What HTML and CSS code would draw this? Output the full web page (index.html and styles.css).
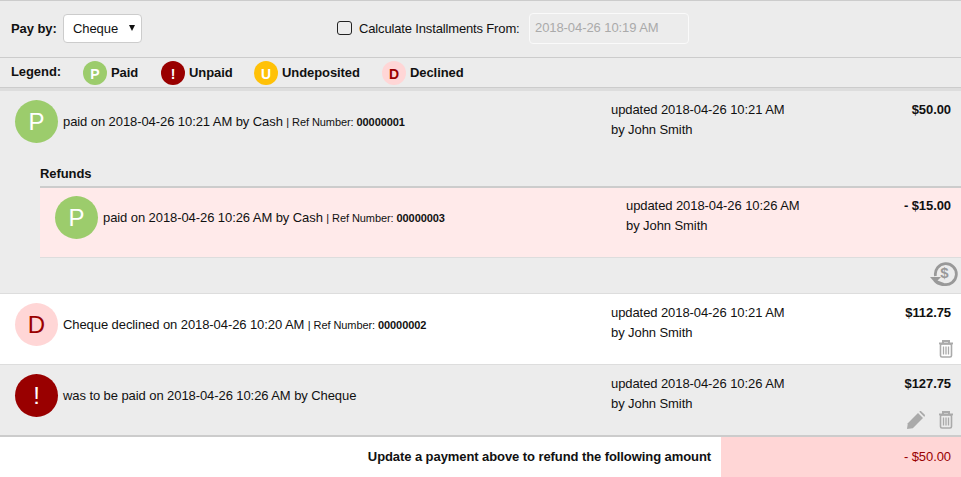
FILE: index.html
```html
<!DOCTYPE html>
<html lang="en">
<head>
    <meta charset="UTF-8">
    <meta name="viewport" content="width=device-width, initial-scale=1.0">
    <title>Payments</title>
    <link rel="stylesheet" href="styles.css">
</head>
<body>
    <div class="toolbar">
        <div class="pay-by">
            <label class="pay-label">Pay by:</label>
            <div class="select">Cheque <span class="caret"></span></div>
        </div>
        <div class="installments">
            <span class="checkbox"></span>
            <span class="install-label">Calculate Installments From:</span>
            <div class="date-input">2018-04-26 10:19 AM</div>
        </div>
    </div>

    <div class="legend">
        <span class="legend-title">Legend:</span>
        <span class="legend-item item-paid"><span class="dot paid">P</span>Paid</span>
        <span class="legend-item item-unpaid"><span class="dot unpaid">!</span>Unpaid</span>
        <span class="legend-item item-undeposited"><span class="dot undeposited">U</span>Undeposited</span>
        <span class="legend-item item-declined"><span class="dot declined">D</span>Declined</span>
    </div>

    <div class="row row-grey row-first">
        <div class="row-main">
            <div class="avatar paid">P</div>
            <div class="desc">paid on 2018-04-26 10:21 AM by Cash <span class="ref">| Ref Number: <b>00000001</b></span></div>
            <div class="updated">updated 2018-04-26 10:21 AM<br>by John Smith</div>
            <div class="amount">$50.00</div>
        </div>
        <div class="refunds">
            <div class="refunds-title">Refunds</div>
            <div class="refund-row">
                <div class="avatar paid">P</div>
                <div class="desc">paid on 2018-04-26 10:26 AM by Cash <span class="ref">| Ref Number: <b>00000003</b></span></div>
                <div class="updated">updated 2018-04-26 10:26 AM<br>by John Smith</div>
                <div class="amount">- $15.00</div>
            </div>
        </div>
        <div class="actions actions-refund">
            <svg class="icon-refund" width="28" height="26" viewBox="0 0 28 26">
                <path d="M5.500 15A10.500 10.500 0 1 1 14 23.500" fill="none" stroke="#999" stroke-width="2.800"/>
                <path d="M0 16h11l-3.500 3.500 6.500 2.500v3c-5 0-9-2.500-10.500-5z" fill="#999"/>
                <text x="14.500" y="17" class="icon-dollar">$</text>
            </svg>
        </div>
    </div>

    <div class="row row-white">
        <div class="row-main">
            <div class="avatar declined">D</div>
            <div class="desc">Cheque declined on 2018-04-26 10:20 AM <span class="ref">| Ref Number: <b>00000002</b></span></div>
            <div class="updated">updated 2018-04-26 10:21 AM<br>by John Smith</div>
            <div class="amount">$112.75</div>
        </div>
        <div class="actions actions-row">
            <svg class="icon-trash" width="16" height="18" viewBox="0 0 16 18">
                <path d="M5 3V1h6V3M1 3.500h14" fill="none" stroke="#aaa" stroke-width="2"/>
                <rect x="2.500" y="4" width="11" height="13" rx="1.500" fill="none" stroke="#aaa" stroke-width="1.600"/>
                <path d="M5.500 6.500v8M8 6.500v8M10.500 6.500v8" stroke="#aaa" stroke-width="1.300"/>
            </svg>
        </div>
    </div>

    <div class="row row-grey row-last">
        <div class="row-main">
            <div class="avatar unpaid">!</div>
            <div class="desc">was to be paid on 2018-04-26 10:26 AM by Cheque</div>
            <div class="updated">updated 2018-04-26 10:26 AM<br>by John Smith</div>
            <div class="amount">$127.75</div>
        </div>
        <div class="actions actions-row">
            <svg class="icon-pencil" width="18" height="18" viewBox="0 0 18 18">
                <path d="M0 18l.8-5.800L11 2l5 5L5.800 17.200z" fill="#aaa"/>
                <path d="M12.200 .8l.4-.4c.5-.5 1.300-.5 1.800 0l3.200 3.200c.5.500.5 1.300 0 1.800l-.4.400z" fill="#aaa"/>
            </svg>
            <svg class="icon-trash" width="16" height="18" viewBox="0 0 16 18">
                <path d="M5 3V1h6V3M1 3.500h14" fill="none" stroke="#aaa" stroke-width="2"/>
                <rect x="2.500" y="4" width="11" height="13" rx="1.500" fill="none" stroke="#aaa" stroke-width="1.600"/>
                <path d="M5.500 6.500v8M8 6.500v8M10.500 6.500v8" stroke="#aaa" stroke-width="1.300"/>
            </svg>
        </div>
    </div>

    <div class="footer">
        <div class="footer-label">Update a payment above to refund the following amount</div>
        <div class="footer-amount">- $50.00</div>
    </div>
</body>
</html>
```

FILE: styles.css
```css
* {
    box-sizing: border-box;
}
html, body {
    margin: 0;
    height: 477px;
    overflow: hidden;
}
body {
    font-family: "Liberation Sans", Arial, sans-serif;
    font-size: 13px;
    letter-spacing: -0.08px;
    line-height: 20px;
    color: #111;
    background: #fff;
}

/* top bar */
.toolbar {
    height: 58px;
    background: #ececec;
    border-top: 1px solid #ccc;
    border-bottom: 1px solid #ccc;
    display: flex;
    align-items: center;
    padding-left: 11px;
}
.pay-by {
    display: flex;
    align-items: center;
    width: 326px;
}
.pay-label {
    font-weight: bold;
    width: 52px;
}
.select {
    width: 79px;
    height: 29px;
    margin-top: -1px;
    background: #fff;
    border: 1px solid #ccc;
    border-radius: 4px;
    padding: 4px 0 0 9px;
    position: relative;
}
.caret {
    position: absolute;
    right: 6px;
    top: 10px;
    border-left: 3.500px solid transparent;
    border-right: 3.500px solid transparent;
    border-top: 6px solid #111;
}
.installments {
    display: flex;
    align-items: center;
}
.checkbox {
    width: 15px;
    height: 14px;
    margin: -3px 7px 0 0;
    border: 1.500px solid #222;
    border-radius: 3px;
}
.install-label {
    width: 170px;
    letter-spacing: -0.15px;
}
.date-input {
    width: 160px;
    height: 31px;
    border: 1px solid #fafafa;
    border-radius: 4px;
    color: #aaa;
    padding: 4px 0 0 5px;
    margin-top: -2px;
}

/* legend */
.legend {
    height: 30px;
    background: #ececec;
    border-bottom: 1px solid #ccc;
    display: flex;
    align-items: center;
    padding-left: 11px;
    font-weight: bold;
}
.legend-title {
    width: 72px;
    margin-top: -2px;
}
.legend-item {
    display: flex;
    align-items: center;
    gap: 4px;
}
.item-paid {
    width: 78px;
}
.item-unpaid {
    width: 93px;
}
.item-undeposited {
    width: 128px;
}
.dot {
    width: 24px;
    height: 24px;
    border-radius: 50%;
    text-align: center;
    line-height: 26px;
    font-size: 14px;
    color: #fff;
}
.paid {
    background: #9ccc6c;
    color: #fff;
}
.unpaid {
    background: #990000;
    color: #fff;
}
.undeposited {
    background: #ffc107;
    color: #fff;
}
.declined {
    background: #ffd6d6;
    color: #990000;
}

/* payment rows */
.row {
    border-bottom: 1px solid #ddd;
    position: relative;
}
.row-grey {
    background: #ececec;
}
.row-white {
    background: #fff;
    height: 71px;
}
.row-first {
    border-top: 3px solid #ddd;
    height: 206px;
}
.row-last {
    height: 72px;
    border-bottom: 2px solid #ccc;
}
.row-main {
    display: flex;
    padding: 7px 10px 0 15px;
}
.avatar {
    flex: none;
    width: 43px;
    height: 43px;
    border-radius: 50%;
    text-align: center;
    font-size: 24px;
    line-height: 43px;
    margin-top: 2px;
}
.desc {
    width: 553px;
    padding: 14px 0 0 5px;
}
.ref {
    font-size: 11px;
}
.updated {
    flex: 1;
    padding-top: 2px;
}
.amount {
    font-weight: bold;
    padding-top: 2px;
}

/* refunds */
.refunds {
    margin: 20px 0 0 40px;
}
.refunds-title {
    font-weight: bold;
    height: 23px;
    padding-top: 1px;
}
.refund-row {
    display: flex;
    height: 72px;
    padding: 6px 10px 0 15px;
    background: #ffeaea;
    border-top: 2px solid #ccc;
    border-bottom: 1px solid #ddd;
}
.refund-row .desc {
    width: 528px;
}

/* action icons */
.actions {
    position: absolute;
    display: flex;
    align-items: center;
}
.actions-refund {
    right: 3px;
    bottom: 6px;
}
.actions-row {
    right: 7px;
    bottom: 6px;
    gap: 13px;
}
.icon-dollar {
    font-size: 15px;
    font-weight: bold;
    fill: #999;
    text-anchor: middle;
}

/* footer */
.footer {
    display: flex;
    height: 40px;
}
.footer-label {
    width: 721px;
    padding: 10px 10px 0 0;
    text-align: right;
    font-weight: bold;
}
.footer-amount {
    flex: 1;
    background: #ffd6d6;
    color: #990000;
    text-align: right;
    padding: 10px 10px 0 0;
}
```
